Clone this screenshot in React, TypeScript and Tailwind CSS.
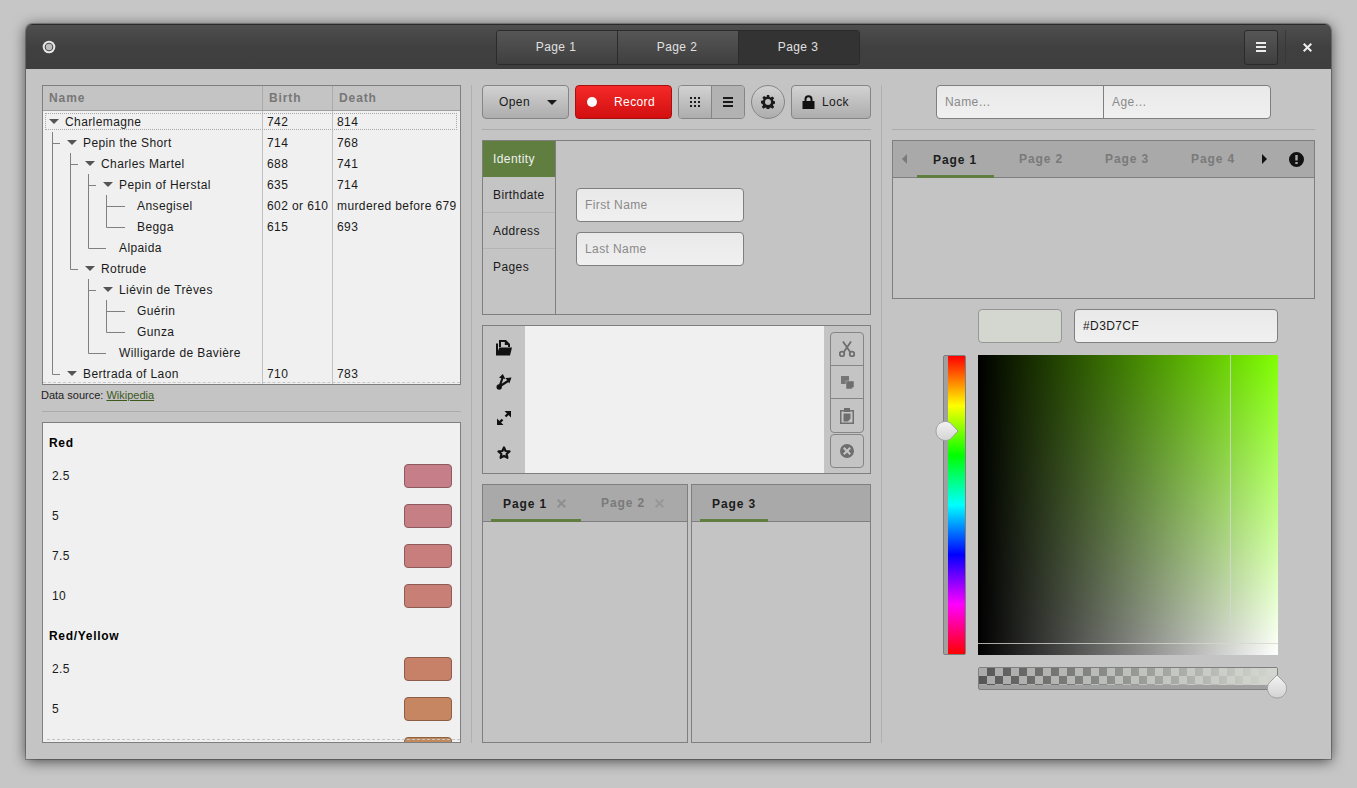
import React from "react";

const btn = "flex items-center border border-[#858585] rounded-[4px] bg-gradient-to-b from-[#d2d2d2] to-[#adadad] text-[#1a1a1a]";
const entry = "h-[34px] border border-[#7f7f7f] rounded-[4px] bg-gradient-to-b from-[#e9e9e9] to-[#f0f0f0] flex items-center px-2 text-[#8a8a8a]";
const tabOn = "font-bold tracking-[0.9px] text-[#1c1c1c]";
const tabOff = "font-bold tracking-[0.9px] text-[#7a7a7a]";

type Row = { name: string; depth: number; open?: boolean; birth?: string; death?: string };
const rows: Row[] = [
  { name: "Charlemagne", depth: 0, open: true, birth: "742", death: "814" },
  { name: "Pepin the Short", depth: 1, open: true, birth: "714", death: "768" },
  { name: "Charles Martel", depth: 2, open: true, birth: "688", death: "741" },
  { name: "Pepin of Herstal", depth: 3, open: true, birth: "635", death: "714" },
  { name: "Ansegisel", depth: 4, birth: "602 or 610", death: "murdered before 679" },
  { name: "Begga", depth: 4, birth: "615", death: "693" },
  { name: "Alpaida", depth: 3 },
  { name: "Rotrude", depth: 2, open: true },
  { name: "Liévin de Trèves", depth: 3, open: true },
  { name: "Guérin", depth: 4 },
  { name: "Gunza", depth: 4 },
  { name: "Willigarde de Bavière", depth: 3 },
  { name: "Bertrada of Laon", depth: 1, open: true, birth: "710", death: "783" },
];

function TreeRow({ r }: { r: Row }) {
  return (
    <div className="flex h-[21px] items-center shrink-0">
      <div className="w-[219px] shrink-0 relative flex items-center h-full" style={{ paddingLeft: 22 + 18 * r.depth }}>
        {r.open && <span className="absolute top-[8px] w-0 h-0 border-x-[5px] border-x-transparent border-t-[5px] border-t-[#555]" style={{ left: 6 + 18 * r.depth }} />}
        <span>{r.name}</span>
      </div>
      <div className="w-[70px] shrink-0 pl-[4px] h-full flex items-center border-l border-[#c2c2c2] whitespace-nowrap">{r.birth}</div>
      <div className="flex-1 pl-[4px] h-full flex items-center border-l border-[#c2c2c2] whitespace-nowrap">{r.death}</div>
    </div>
  );
}

function Tree() {
  return (
    <div className="h-[300px] border border-[#7f7f7f] bg-[#f0f0f0] overflow-hidden relative flex flex-col shrink-0">
      <div className="h-[25px] shrink-0 flex items-center bg-[#c4c4c4] border-b border-[#a0a0a0] font-bold text-[#777] tracking-[0.9px]">
        <div className="w-[219px] pl-[6px]">Name</div>
        <div className="w-[70px] pl-[6px] h-full flex items-center border-l border-[#aaa]">Birth</div>
        <div className="flex-1 pl-[6px] h-full flex items-center border-l border-[#aaa]">Death</div>
      </div>
      <div className="relative flex flex-col flex-1 overflow-hidden">
        {rows.map((r, i) => <TreeRow key={i} r={r} />)}
        <div className="absolute left-[2px] right-[3px] top-[2px] h-[17px] border border-dotted border-[#a8a8a8]" />
        <svg className="absolute left-0 top-0" width="100" height="273" stroke="#808080" fill="none">
          <path d="M9.5 21V263.5H17 M9.5 32.5H17 M27.5 42V158.5H35 M27.5 53.5H35 M45.5 63V137.5H63 M45.5 74.5H53 M63.5 84V116.5H82 M63.5 95.5H82 M45.5 168V242.5H63 M45.5 179.5H53 M63.5 189V221.5H82 M63.5 200.5H82" />
        </svg>
        <div className="absolute left-0 right-0 bottom-[1px] border-b border-dashed border-[#c8c8c8]" />
      </div>
    </div>
  );
}

function ColorRow({ label, color, border }: { label: string; color: string; border: string }) {
  return (
    <div className="h-[40px] shrink-0 flex items-center justify-between pl-[3px] pr-[2px]">
      <span>{label}</span>
      <span className="w-[48px] h-[24px] rounded-[4px] border" style={{ backgroundColor: color, borderColor: border }} />
    </div>
  );
}

function ColorList() {
  return (
    <div className="flex-1 min-h-0 border border-[#7f7f7f] bg-[#f0f0f0] overflow-hidden relative px-[6px] pt-[10px]">
      <div className="h-[20px] mb-[3px] flex items-center font-bold tracking-[0.7px] text-black">Red</div>
      <ColorRow label="2.5" color="#c67e88" border="#8e5a62" />
      <ColorRow label="5" color="#c67f85" border="#8e5a60" />
      <ColorRow label="7.5" color="#c77e7d" border="#8e5a5a" />
      <ColorRow label="10" color="#c88076" border="#8e5b54" />
      <div className="h-[20px] mt-[10px] mb-[3px] flex items-center font-bold tracking-[0.7px] text-black">Red/Yellow</div>
      <ColorRow label="2.5" color="#c68168" border="#8d5c4a" />
      <ColorRow label="5" color="#c58661" border="#8c5f45" />
      <ColorRow label="" color="#c28a5c" border="#8c6342" />
      <div className="absolute left-[4px] right-0 bottom-[2px] border-b border-dashed border-[#c4c4c4]" />
    </div>
  );
}

const GearIcon = () => (
  <svg width="14" height="14" viewBox="0 0 16 16" fill="#1a1a1a" fillRule="evenodd">
    <path d="M6.600 0h2.800l.4 2.300 1.300.6 2-1.300 2 2-1.400 1.900.6 1.300 2.300.4v2.800l-2.300.4-.6 1.300 1.400 2-2 2-2-1.400-1.300.6-.4 2.300H6.600l-.4-2.300-1.300-.6-2 1.400-2-2 1.400-2-.6-1.300L0 9.400V6.600l2.300-.4.6-1.300-1.400-1.900 2-2 2 1.300 1.300-.6zM8 4.600a3.400 3.400 0 1 0 0 6.800 3.400 3.400 0 0 0 0-6.800z" />
  </svg>
);

const GridIcon = () => (
  <svg width="11" height="11" viewBox="0 0 11 11" fill="#1a1a1a">
    {[0, 4, 8].flatMap((y) => [0, 4, 8].map((x) => <rect key={`${x}-${y}`} x={x} y={y} width="2" height="2" />))}
  </svg>
);

const LinesIcon = ({ color = "#1a1a1a" }: { color?: string }) => (
  <svg width="10" height="10" viewBox="0 0 10 10" fill={color}>
    <rect y="0" width="10" height="2" /><rect y="4" width="10" height="2" /><rect y="8" width="10" height="2" />
  </svg>
);

function Toolbar() {
  return (
    <div className="h-[34px] flex shrink-0">
      <div className={`${btn} w-[87px] pl-[16px]`}>
        <span>Open</span>
        <span className="ml-[17px] w-0 h-0 border-x-[5px] border-x-transparent border-t-[5px] border-t-[#1a1a1a]" />
      </div>
      <div className="ml-[6px] w-[97px] flex items-center border border-[#a81010] rounded-[4px] bg-gradient-to-b from-[#f52828] to-[#d20e0e] text-white pl-[11px]">
        <span className="w-[10px] h-[10px] rounded-full bg-white" />
        <span className="ml-[17px]">Record</span>
      </div>
      <div className="ml-[6px] w-[67px] flex border border-[#858585] rounded-[4px] overflow-hidden">
        <div className="w-[33px] flex items-center justify-center bg-gradient-to-b from-[#d2d2d2] to-[#adadad] border-r border-[#858585]"><GridIcon /></div>
        <div className="flex-1 flex items-center justify-center bg-[#b2b2b2]"><LinesIcon /></div>
      </div>
      <div className={`${btn} ml-[6px] w-[34px] justify-center !rounded-full`}><GearIcon /></div>
      <div className={`${btn} ml-[6px] w-[80px] pl-[10px]`}>
        <svg width="13" height="14" viewBox="0 0 13 14" fill="#111"><path d="M2.500 6V4.200a4 4 0 0 1 8 0V6H12.500v8H.5V6zM4.500 6h4V4.200a2 2 0 0 0-4 0z" fillRule="evenodd" /></svg>
        <span className="ml-[7px]">Lock</span>
      </div>
    </div>
  );
}

function SideNotebook() {
  const items = ["Identity", "Birthdate", "Address", "Pages"];
  return (
    <div className="h-[175px] shrink-0 border border-[#7f7f7f] flex">
      <div className="w-[73px] border-r border-[#7f7f7f] flex flex-col shrink-0">
        {items.map((t, i) => (
          <div key={t} className={`h-[36px] flex items-center pl-[10px] ${i === 0 ? "bg-[#5f7e3f] text-[#f0f0f0]" : "text-[#1a1a1a]"} ${i > 0 && i < 3 ? "border-b border-[#b4b4b4]" : ""}`}>{t}</div>
        ))}
      </div>
      <div className="flex-1 pl-[20px] pt-[47px] flex flex-col gap-[10px]">
        <div className={`${entry} w-[168px]`}>First Name</div>
        <div className={`${entry} w-[168px]`}>Last Name</div>
      </div>
    </div>
  );
}

function EditorBox() {
  const ic = "w-full h-[33px] flex items-center justify-center";
  return (
    <div className="h-[149px] shrink-0 border border-[#7f7f7f] flex">
      <div className="w-[42px] shrink-0 flex flex-col items-center pt-[14px] gap-[19px]">
        <svg width="16" height="16" viewBox="0 0 16 16" fill="#111">
          <path d="M3 0h7l4 4v3h-2V5H8.800V2H5v5H3zM0 3.500h2V11L3.300 7.500H16l-2 8H0z" />
        </svg>
        <svg className="mt-[-1px] mb-[1px]" width="16" height="16" viewBox="0 0 16 16" fill="#111" stroke="#111">
          <circle cx="3.200" cy="13" r="2.700" stroke="none" />
          <path d="M3.500 12.500L6.500 4M3.500 12.500L12 7" strokeWidth="2.200" fill="none" />
          <path d="M3 3.800L6.800 0l2.600 5zM9.500 4l6-.5-2.200 6z" stroke="none" />
        </svg>
        <svg width="16" height="16" viewBox="0 0 16 16" fill="#111" stroke="#111">
          <path d="M3 13l3.500-3.500M13 3L9.500 6.500" strokeWidth="2.400" fill="none" />
          <path d="M1 8.500V15h6.500zM15 7.500V1H8.500z" stroke="none" />
        </svg>
        <svg width="16" height="16" viewBox="0 0 16 16" fill="none" stroke="#111" strokeWidth="2.200" strokeLinejoin="round">
          <path d="M8 2.500l1.600 3.500 3.900.4-2.900 2.600.8 3.800L8 10.900l-3.400 1.900.8-3.800-2.900-2.600 3.900-.4z" />
        </svg>
      </div>
      <div className="flex-1 bg-[#f0f0f0]" />
      <div className="w-[46px] shrink-0 pl-[6px] pt-[6px] flex flex-col gap-[1px]">
        <div className="border border-[#858585] rounded-[4px] flex flex-col w-[34px] bg-[#c4c4c4] overflow-hidden">
          <div className={`${ic} border-b border-[#858585]`}>
            <svg width="16" height="16" viewBox="0 0 16 16" fill="none" stroke="#6e6e6e" strokeWidth="1.800">
              <circle cx="3" cy="13" r="2.300" /><circle cx="13" cy="13" r="2.300" />
              <path d="M4.500 11.500L12 .5M11.500 11.500L4 .5" />
            </svg>
          </div>
          <div className={`${ic} border-b border-[#858585]`}>
            <svg width="13" height="13" viewBox="0 0 13 13" fill="#6e6e6e">
              <rect x="0" y="0" width="8" height="8" fill="#767676" />
              <path d="M5 5h8v5.500L10.500 13H5z" stroke="#c4c4c4" strokeWidth="0.500" />
            </svg>
          </div>
          <div className={`${ic} h-[32px]`}>
            <svg width="14" height="16" viewBox="0 0 14 16" fill="#6e6e6e" fillRule="evenodd">
              <path d="M4 0h6v2h4v14H0V2h4zM1.500 3.500v11h11v-11H10V4H4v-.5z" />
              <path d="M3.500 5.500h7v5l-2.500 3h-4.500z" />
            </svg>
          </div>
        </div>
        <div className="border border-[#858585] rounded-[4px] w-[34px] h-[34px] flex items-center justify-center">
          <svg width="14" height="14" viewBox="0 0 14 14" fill="#6e6e6e" fillRule="evenodd">
            <path d="M7 0a7 7 0 1 1 0 14A7 7 0 0 1 7 0zM4.500 3L3 4.500 5.500 7 3 9.500 4.500 11 7 8.500 9.500 11 11 9.500 8.500 7 11 4.500 9.500 3 7 5.500z" />
          </svg>
        </div>
      </div>
    </div>
  );
}

const TabX = ({ color }: { color: string }) => (
  <svg className="ml-[10px]" width="9" height="9" viewBox="0 0 9 9" stroke={color} strokeWidth="2"><path d="M.7.7l7.600 7.600M8.300.7L.7 8.300" /></svg>
);

function SplitNotebooks() {
  return (
    <div className="flex-1 min-h-0 flex gap-[3px]">
      <div className="w-[206px] border border-[#7f7f7f] shrink-0 flex flex-col">
        <div className="h-[37px] shrink-0 border-b border-[#7f7f7f] bg-[#a9a9a9] flex pl-[8px]">
          <div className="w-[90px] border-b-[3px] border-[#5f7e3f] mb-[-1px] pl-[12px] pt-[3px] flex items-center">
            <span className={tabOn}>Page 1</span><TabX color="#8e8e8e" />
          </div>
          <div className="w-[90px] ml-[8px] pl-[12px] flex items-center">
            <span className={tabOff}>Page 2</span><TabX color="#979797" />
          </div>
        </div>
      </div>
      <div className="flex-1 border border-[#7f7f7f] flex flex-col">
        <div className="h-[37px] shrink-0 border-b border-[#7f7f7f] bg-[#a9a9a9] flex pl-[8px]">
          <div className="w-[68px] border-b-[3px] border-[#5f7e3f] mb-[-1px] pl-[12px] pt-[3px] flex items-center">
            <span className={tabOn}>Page 3</span>
          </div>
        </div>
      </div>
    </div>
  );
}

function RightNotebook() {
  const tabs = ["Page 2", "Page 3", "Page 4"];
  return (
    <div className="h-[159px] shrink-0 border border-[#7f7f7f]">
      <div className="h-[37px] border-b border-[#7f7f7f] bg-[#a9a9a9] flex items-stretch">
        <div className="w-[24px] flex items-center pl-[9px]">
          <span className="w-0 h-0 border-y-[5px] border-y-transparent border-r-[5px] border-r-[#7a7a7a]" />
        </div>
        <div className="w-[77px] border-b-[3px] border-[#5f7e3f] mb-[-1px] pl-[16px] pt-[3px] flex items-center"><span className={tabOn}>Page 1</span></div>
        {tabs.map((t) => (
          <div key={t} className="w-[77px] ml-[9px] pl-[16px] flex items-center"><span className={tabOff}>{t}</span></div>
        ))}
        <div className="ml-[10px] flex items-center">
          <span className="w-0 h-0 border-y-[5px] border-y-transparent border-l-[5px] border-l-[#111]" />
        </div>
        <div className="ml-[22px] flex items-center">
          <svg width="15" height="15" viewBox="0 0 15 15" fillRule="evenodd" fill="#111">
            <path d="M7.500 0a7.500 7.500 0 1 1 0 15 7.500 7.500 0 0 1 0-15zM6.300 3v5.500h2.400V3zM6.300 10v2h2.400v-2z" />
          </svg>
        </div>
      </div>
    </div>
  );
}

function ColorPicker() {
  return (
    <div className="flex flex-col">
      <div className="flex pl-[86px] mt-[10px] h-[34px]">
        <div className="w-[84px] border border-[#969696] rounded-[4px] bg-[#d3d7cf]" />
        <div className={`${entry} w-[204px] ml-[12px] !text-[#1a1a1a]`}>#D3D7CF</div>
      </div>
      <div className="flex pl-[51px] mt-[12px]">
        <div className="relative w-[23px] h-[300px] shrink-0 flex border border-[#7f7f7f] rounded-[2px] bg-[#a0a0a0]">
          <div className="ml-[4px] flex-1 bg-[linear-gradient(to_bottom,#f00,#ff0,#0f0,#0ff,#00f,#f0f,#f00)]" />
          <svg className="absolute left-[-9px] top-[64px]" width="25" height="22" viewBox="0 0 25 22">
            <defs>
              <linearGradient id="th" x1="0" y1="0" x2="0" y2="1"><stop offset="0" stopColor="#f2f2f2" /><stop offset="1" stopColor="#d4d4d4" /></linearGradient>
            </defs>
            <path d="M10.500 1.500C5 1.500 1 5.500 1 11s4 9.500 9.500 9.500c3 0 4.500-1 6-2.500L23 11l-6.500-7c-1.500-1.500-3-2.500-6-2.500z" fill="url(#th)" stroke="#a0a0a0" strokeWidth="1" />
          </svg>
        </div>
        <div className="relative ml-[12px] w-[300px] h-[300px] shrink-0 bg-[linear-gradient(to_right,#000,rgba(0,0,0,0)),linear-gradient(to_top,#fff,#7fff00)]">
          <div className="absolute top-0 bottom-0 left-[252px] w-px bg-[#d3d7cf]/80" />
          <div className="absolute left-0 right-0 top-[288px] h-px bg-[#d3d7cf]/80" />
        </div>
      </div>
      <div className="pl-[86px] mt-[12px] relative">
        <div className="relative w-[300px] h-[23px] border border-[#7f7f7f] rounded-[2px] bg-[#a0a0a0]">
          <div className="h-[17px] bg-[linear-gradient(to_right,rgba(211,215,207,0),#d3d7cf),repeating-conic-gradient(#555_0_25%,#aaa_0_50%)] bg-[length:100%_100%,16px_16px]" />
          <svg className="absolute left-[287px] top-[6px]" width="22" height="25" viewBox="0 0 22 25">
            <defs>
              <linearGradient id="tg" x1="0" y1="0" x2="0" y2="1"><stop offset="0" stopColor="#f4f4f4" /><stop offset="1" stopColor="#d2d2d2" /></linearGradient>
            </defs>
            <path d="M11 1L4 8C2 10 1.500 11.500 1.500 14.500 1.500 20 5.500 24 11 24s9.500-4 9.500-9.500c0-3-.5-4.500-2.500-6.500z" fill="url(#tg)" stroke="#a0a0a0" strokeWidth="1" />
          </svg>
        </div>
      </div>
    </div>
  );
}

export default function App() {
  const pageTab = "flex items-center justify-center pr-[2px] text-[#e0e0e0]";
  return (
    <div className="min-h-screen w-[1357px] h-[788px] overflow-hidden bg-[#c6c6c6] pt-[24px] pl-[26px] font-['Liberation_Sans',sans-serif] text-[12px] tracking-[0.4px] text-[#1a1a1a]">
      <div className="w-[1305px] h-[735px] rounded-t-[6px] bg-[#c4c4c4] shadow-[0_0_0_1px_rgba(0,0,0,0.25),0_2px_14px_rgba(0,0,0,0.65)] flex flex-col overflow-hidden">
        <div className="h-[45px] shrink-0 border-t border-[#2a2a2a] bg-gradient-to-b from-[#4e4e4e] via-[#404040] via-50% to-[#3e3e3e] flex items-center relative px-[16px]">
          <svg width="14" height="14" viewBox="0 0 14 14">
            <circle cx="7" cy="7" r="6.300" fill="#e6e6e6" />
            <circle cx="7" cy="7" r="4.300" fill="#4a4a4a" />
            <circle cx="7" cy="7" r="3.200" fill="#bdbdbd" />
          </svg>
          <div className="ml-[440px] w-[364px] h-[35px] flex border border-[#2b2b2b] rounded-[3px] overflow-hidden">
            <div className={`${pageTab} w-[121px] border-r border-[#2b2b2b] bg-gradient-to-b from-[#565656] to-[#3f3f3f]`}>Page 1</div>
            <div className={`${pageTab} w-[121px] border-r border-[#2b2b2b] bg-gradient-to-b from-[#565656] to-[#3f3f3f]`}>Page 2</div>
            <div className={`${pageTab} w-[120px] bg-[#333333]`}>Page 3</div>
          </div>
          <div className="ml-[384px] w-[34px] h-[35px] border border-[#2b2b2b] rounded-[3px] bg-gradient-to-b from-[#565656] to-[#3f3f3f] flex items-center justify-center">
            <LinesIcon color="#ececec" />
          </div>
          <div className="ml-[7px] w-px h-[35px] bg-[#383838]" />
          <svg className="ml-[17px]" width="9" height="9" viewBox="0 0 9 9" stroke="#eeeeee" strokeWidth="2"><path d="M.7.7l7.600 7.600M8.300.7L.7 8.300" /></svg>
        </div>
        <div className="flex-1 min-h-0 flex p-[16px]">
          <div className="w-[419px] shrink-0 flex flex-col">
            <Tree />
            <div className="h-[20px] shrink-0 flex items-center text-[11px] tracking-[0px] ml-[-1px] text-[#222]">
              <span>Data source:&nbsp;</span><span className="text-[#3d5a1e] underline">Wikipedia</span>
            </div>
            <div className="h-px bg-[#ababab] mt-[6px] mb-[10px] shrink-0" />
            <ColorList />
          </div>
          <div className="w-px bg-[#b0b0b0] mx-[10px] shrink-0" />
          <div className="w-[389px] shrink-0 flex flex-col">
            <Toolbar />
            <div className="h-px bg-[#ababab] mt-[10px] mb-[10px] shrink-0" />
            <SideNotebook />
            <div className="h-[10px] shrink-0" />
            <EditorBox />
            <div className="h-[10px] shrink-0" />
            <SplitNotebooks />
          </div>
          <div className="w-px bg-[#b0b0b0] mx-[10px] shrink-0" />
          <div className="flex-1 flex flex-col min-w-0">
            <div className="flex justify-center h-[34px] shrink-0">
              <div className="w-[335px] flex border border-[#7f7f7f] rounded-[4px] overflow-hidden bg-gradient-to-b from-[#e9e9e9] to-[#f0f0f0] text-[#8a8a8a]">
                <div className="w-[167px] border-r border-[#7f7f7f] flex items-center pl-[8px]">Name…</div>
                <div className="flex-1 flex items-center pl-[8px]">Age…</div>
              </div>
            </div>
            <div className="h-px bg-[#ababab] mt-[10px] mb-[10px] shrink-0" />
            <RightNotebook />
            <ColorPicker />
          </div>
        </div>
      </div>
    </div>
  );
}
